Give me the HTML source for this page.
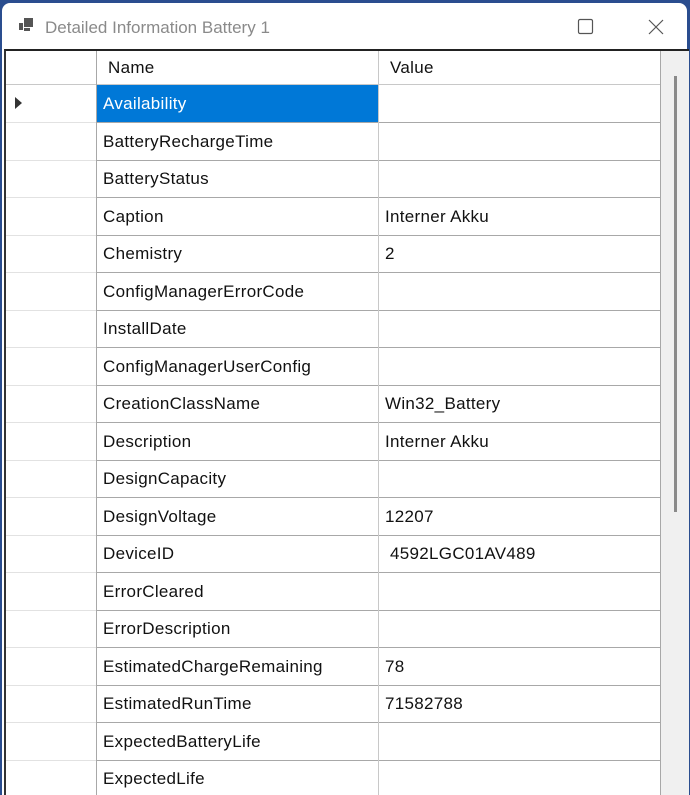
<!DOCTYPE html>
<html><head><style>
html,body{margin:0;width:690px;height:795px;overflow:hidden}
body{background:#2a4d8f;position:relative;font-family:"Liberation Sans",sans-serif}
.win{position:absolute;left:2px;top:3px;width:685px;height:792px;background:#fff;border-radius:8px 8px 0 0}
.title{position:absolute;left:43px;top:15px;font-size:17px;color:#8a8a8a}
.grid{position:absolute;left:4px;top:49px;width:683px;height:746px;border-top:2px solid #222;border-left:2px solid #333;background:#fff;overflow:hidden}
.cell{position:absolute;box-sizing:border-box;font-size:17px;letter-spacing:0.3px;color:#111;padding-left:6px;line-height:37px;white-space:nowrap}
.h{position:absolute;height:1px;background:#a8a8a8}
.v{position:absolute;width:1px;background:#a8a8a8}
</style></head><body>
<div class="win">
<svg style="position:absolute;left:16px;top:14px" width="16" height="16"><rect x="6" y="1" width="9" height="9" fill="#555"/><rect x="1" y="6" width="4" height="7" fill="#555"/><rect x="6" y="11" width="6" height="3" fill="#555"/></svg>
<div class="title">Detailed Information Battery 1</div>
<svg style="position:absolute;left:560px;top:12px" width="120" height="24"><rect x="16.5" y="4.5" width="14" height="14" rx="1.5" fill="none" stroke="#555" stroke-width="1.2"/><path d="M87 5 L101 19 M101 5 L87 19" stroke="#555" stroke-width="1.2"/></svg>
</div>
<div class="grid" id="g"></div>
<script>
var g=document.getElementById('g');
var H='';
function X(x){return x-6}function Y(y){return y-51}
var rows=[["Availability",""],["BatteryRechargeTime",""],["BatteryStatus",""],["Caption","Interner Akku"],["Chemistry","2"],["ConfigManagerErrorCode",""],["InstallDate",""],["ConfigManagerUserConfig",""],["CreationClassName","Win32_Battery"],["Description","Interner Akku"],["DesignCapacity",""],["DesignVoltage","12207"],["DeviceID","&nbsp;4592LGC01AV489"],["ErrorCleared",""],["ErrorDescription",""],["EstimatedChargeRemaining","78"],["EstimatedRunTime","71582788"],["ExpectedBatteryLife",""],["ExpectedLife",""]];
H+='<div style="position:absolute;left:'+X(661)+'px;top:0;width:30px;height:760px;background:#f0f0f0"></div>';
H+='<div style="position:absolute;left:'+X(674)+'px;top:'+Y(76)+'px;width:3px;height:436px;background:#8a8a8a"></div>';
H+='<div class="cell" style="left:'+X(102)+'px;top:'+Y(51)+'px;line-height:34px">Name</div>';
H+='<div class="cell" style="left:'+X(384)+'px;top:'+Y(51)+'px;line-height:34px">Value</div>';
H+='<div class="h" style="left:0;width:'+X(661)+'px;top:'+Y(84)+'px;background:#c8c8c8"></div>';
for(var i=0;i<rows.length;i++){
 var t=85+i*37.5;
 if(i==0)H+='<div style="position:absolute;left:'+X(97)+'px;top:'+Y(85)+'px;width:281px;height:37px;background:#0078d7"></div>';
 H+='<div class="cell" style="left:'+X(97)+'px;top:'+Y(t)+'px;'+(i==0?'color:#fff':'')+'">'+rows[i][0]+'</div>';
 H+='<div class="cell" style="left:'+X(379)+'px;top:'+Y(t)+'px">'+rows[i][1]+'</div>';
 var b=Math.round(t+37);
 H+='<div class="h" style="left:0;width:'+X(97)+'px;top:'+Y(b)+'px;background:#e2e2e2"></div>';
 H+='<div class="h" style="left:'+X(97)+'px;width:'+(661-97)+'px;top:'+Y(b)+'px"></div>';
}
H+='<div class="v" style="left:'+X(96)+'px;top:0;height:760px"></div>';
H+='<div class="v" style="left:'+X(378)+'px;top:0;height:760px;background:#c8c8c8"></div>';
H+='<div class="v" style="left:'+X(660)+'px;top:0;height:760px"></div>';
H+='<svg style="position:absolute;left:'+X(15)+'px;top:'+Y(97)+'px" width="8" height="12"><path d="M0 0 L7 6 L0 12Z" fill="#333"/></svg>';
g.innerHTML=H;
</script>
</body></html>
